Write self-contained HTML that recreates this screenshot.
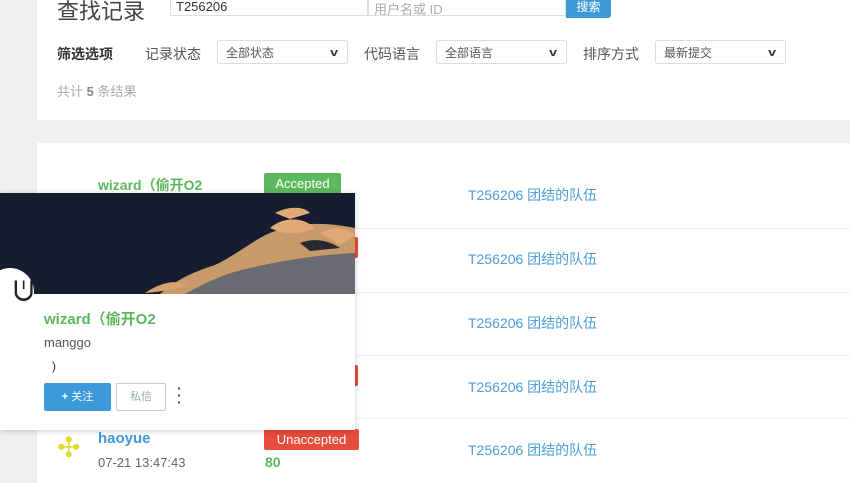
<!DOCTYPE html>
<html><head><meta charset="utf-8"><style>
body{margin:0;width:850px;height:478px;overflow:hidden;background:#efefef;font-family:"Liberation Sans","Noto Sans CJK SC",sans-serif;position:relative}
.card{position:absolute;background:#fff}
.abs{position:absolute;white-space:nowrap}
.sel{position:absolute;height:24px;border:1px solid #ddd;border-radius:3px;background:#fff;font-size:12px;color:#555;line-height:24px;padding-left:8px;box-sizing:border-box}
.sel b{position:absolute;right:10px;top:0;font-size:11px;color:#333;transform:scaleX(1.3)}
.prob{position:absolute;left:468px;color:#4a9fd6;font-size:14px}
.tag{position:absolute;left:264px;height:21px;color:#fff;font-size:13px;line-height:21px;text-align:center;border-radius:2px}
.line{position:absolute;left:37px;right:0;height:1px;background:#eee}
</style></head><body>
<div class="card" style="left:37px;top:0;width:813px;height:120px"></div>
<div class="abs" style="left:57px;top:-6px;font-size:22px;color:#444">查找记录</div>
<div class="abs" style="left:170px;top:-8px;width:198px;height:24px;border:1px solid #ddd;box-sizing:border-box;font-size:13px;color:#333;padding:6px 5px">T256206</div>
<div class="abs" style="left:368px;top:-8px;width:198px;height:24px;border:1px solid #ddd;box-sizing:border-box;font-size:13px;color:#aaa;padding:6px 5px">用户名或 ID</div>
<div class="abs" style="left:566px;top:-8px;width:45px;height:26px;background:#3d9ad8;color:#fff;font-size:12px;text-align:center;line-height:30px;border-radius:0 3px 3px 0">搜索</div>
<div class="abs" style="left:57px;top:44px;font-size:14px;color:#333;font-weight:bold">筛选选项</div>
<div class="abs" style="left:145px;top:44px;font-size:14px;color:#555">记录状态</div>
<div class="sel" style="left:217px;top:40px;width:131px">全部状态<b>v</b></div>
<div class="abs" style="left:364px;top:44px;font-size:14px;color:#555">代码语言</div>
<div class="sel" style="left:436px;top:40px;width:131px">全部语言<b>v</b></div>
<div class="abs" style="left:583px;top:44px;font-size:14px;color:#555">排序方式</div>
<div class="sel" style="left:655px;top:40px;width:131px">最新提交<b>v</b></div>
<div class="abs" style="left:57px;top:81px;font-size:13px;color:#aaa">共计 <b style="color:#888">5</b> 条结果</div>

<div class="card" style="left:37px;top:143px;width:813px;height:340px"></div>
<div class="line" style="top:228px"></div><div class="line" style="top:292px"></div><div class="line" style="top:355px"></div><div class="line" style="top:418px"></div>
<div class="abs" style="left:98px;top:175px;font-size:14px;color:#5cb85c;font-weight:bold">wizard（偷开O2</div>
<div class="tag" style="top:173px;width:77px;background:#5cb85c">Accepted</div>
<div class="tag" style="top:237px;left:353px;width:5px;background:#e74c3c"></div>
<div class="tag" style="top:301px;background:#eaf6ea;width:77px"></div>
<div class="tag" style="top:365px;background:#fbecec;width:90px"></div>
<div class="tag" style="top:365px;left:353px;width:5px;background:#e74c3c"></div>
<div class="prob" style="top:185px">T256206 团结的队伍</div>
<div class="prob" style="top:249px">T256206 团结的队伍</div>
<div class="prob" style="top:313px">T256206 团结的队伍</div>
<div class="prob" style="top:377px">T256206 团结的队伍</div>
<div class="prob" style="top:440px">T256206 团结的队伍</div>
<div class="abs" style="left:57px;top:432px;width:32px;height:32px;color:#dede30;font-size:28px;line-height:32px">✣</div>
<div class="abs" style="left:98px;top:430px;font-size:15px;color:#3d9ad8;font-weight:bold">haoyue</div>
<div class="abs" style="left:98px;top:455px;font-size:13px;color:#666">07-21 13:47:43</div>
<div class="tag" style="top:429px;width:95px;background:#e74c3c">Unaccepted</div>
<div class="abs" style="left:265px;top:454px;font-size:14px;color:#5cb85c;font-weight:bold">80</div>

<div class="abs" style="left:0;top:193px;width:355px;height:237px;background:#fff;box-shadow:0 1px 6px rgba(0,0,0,.2)"></div>
<svg class="abs" style="left:0;top:193px" width="355" height="101" viewBox="0 0 355 101">
<rect width="355" height="101" fill="#151d2e"/>
<path d="M160 101 C175 88 190 80 215 72 C240 60 255 45 275 38 C300 28 330 30 355 35 L355 101 Z" fill="#c89a6a"/>
<path d="M185 101 C205 90 225 80 250 75 C280 68 315 62 355 60 L355 101 Z" fill="#6a6a72"/>
<path d="M270 35 C285 22 305 25 315 35 C300 42 285 42 270 35Z M320 40 C335 32 350 36 355 42 L340 52Z M275 20 C290 12 305 14 310 20 L290 26Z" fill="#e0aa78"/>
<path d="M300 50 C315 44 330 48 340 55 L310 58Z" fill="#2a2a33"/>
<path d="M145 100 C160 90 175 86 188 92 C175 96 160 99 145 100Z" fill="#d9a070"/>
</svg>
<div class="abs" style="left:-14px;top:268px;width:48px;height:48px;border-radius:50%;background:#fff;font-size:28px;line-height:48px;text-align:right;color:#222">ᕫ</div>
<div class="abs" style="left:44px;top:308px;font-size:15px;color:#5cb85c;font-weight:bold">wizard（偷开O2</div>
<div class="abs" style="left:44px;top:335px;font-size:13px;color:#555">manggo</div>
<div class="abs" style="left:52px;top:359px;font-size:12px;color:#333">)</div>
<div class="abs" style="left:44px;top:383px;width:67px;height:28px;background:#3d9ad8;color:#fff;font-size:11px;line-height:28px;text-align:center;border-radius:2px"><b>+</b> 关注</div>
<div class="abs" style="left:116px;top:383px;width:50px;height:28px;border:1px solid #bcd;box-sizing:border-box;color:#9ab;font-size:11px;line-height:26px;text-align:center;border-radius:2px">私信</div>
<div class="abs" style="left:177px;top:385px;font-size:14px;color:#444;font-weight:bold;line-height:7px">·<br>·<br>·</div>
</body></html>
